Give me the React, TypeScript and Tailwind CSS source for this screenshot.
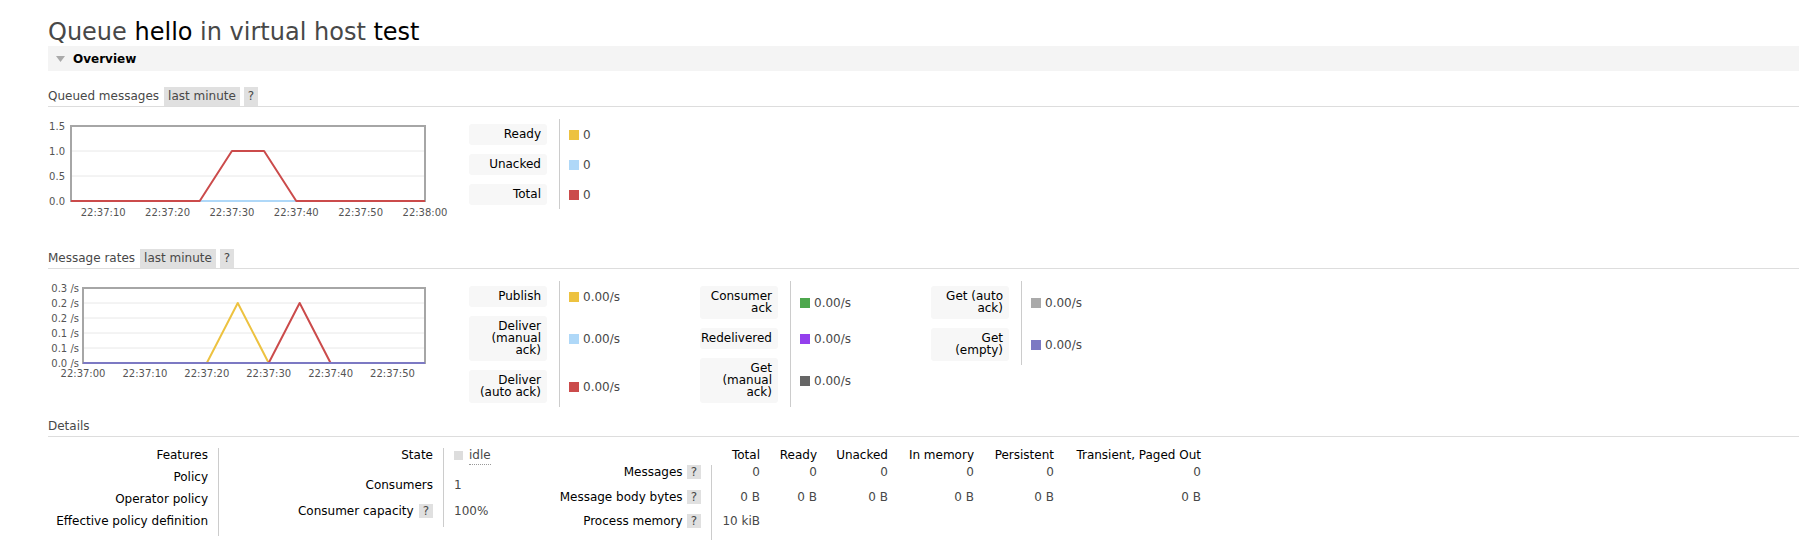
import React from "react";

type LegendItem = { label: React.ReactNode; color: string; value: string; h: string };

function SectionHeader({ title, className = "" }: { title: string; className?: string }) {
  return (
    <div className={"flex items-end border-b border-[#dddddd] h-[20px] text-[#484848] " + className}>
      <span className="leading-[19px]">{title}</span>
      <span className="ml-[5px] bg-[#e0e0e0] px-[4px] leading-[19px]">last minute</span>
      <span className="ml-[4px] bg-[#e0e0e0] px-[4px] leading-[19px]">?</span>
    </div>
  );
}

function Legend({ items }: { items: LegendItem[] }) {
  return (
    <div className="flex flex-col w-[231px] shrink-0">
      {items.map((it, i) => (
        <div key={i} className="flex">
          <div className="w-[90px] pr-[12px] py-[4.5px] shrink-0">
            <div className="w-[78px] bg-[#f7f7f7] rounded-[3px] text-right pr-[6px] py-[4.5px] leading-[12px] text-black whitespace-nowrap">
              {it.label}
            </div>
          </div>
          <div className="flex-1 border-l border-[#cccccc] pl-[9px] pt-[2px] flex items-center text-[#484848]">
            <span className={"w-[10px] h-[10px] mr-[4px] shrink-0 " + it.color} />
            <span>{it.value}</span>
          </div>
        </div>
      ))}
    </div>
  );
}

function Help({ className = "" }: { className?: string }) {
  return <span className={"inline-block bg-[#e0e0e0] px-[4px] leading-[14px] text-[#484848] " + className}>?</span>;
}

function Chart1() {
  const x = (t: number) => 23 + t * 6.436;
  const ticks = [5, 15, 25, 35, 45, 55];
  const labels = ["22:37:10", "22:37:20", "22:37:30", "22:37:40", "22:37:50", "22:38:00"];
  return (
    <svg width="421" height="100" className="shrink-0 block">
      <line x1="23" x2="377" y1="32" y2="32" stroke="#e8e8e8" strokeWidth="1" />
      <line x1="23" x2="377" y1="57" y2="57" stroke="#e8e8e8" strokeWidth="1" />
      <rect x="23" y="7" width="354" height="75" fill="none" stroke="#a6a6a6" strokeWidth="2" />
      {[["1.5", 7], ["1.0", 32], ["0.5", 57], ["0.0", 82]].map(([l, y]) => (
        <text key={l as string} x="17" y={(y as number) + 3.6} textAnchor="end" fontSize="10" fill="#545454">
          {l}
        </text>
      ))}
      {ticks.map((t, i) => (
        <text key={i} x={x(t)} y={96.6} textAnchor="middle" fontSize="10" fill="#545454">
          {labels[i]}
        </text>
      ))}
      <polyline points={`23,82 377,82`} fill="none" stroke="#edc240" strokeWidth="2" />
      <polyline points={`23,82 377,82`} fill="none" stroke="#afd8f8" strokeWidth="2" />
      <polyline
        points={`23,82 ${x(20)},82 ${x(25)},32 ${x(30)},32 ${x(35)},82 377,82`}
        fill="none"
        stroke="#cb4b4b"
        strokeWidth="2"
        strokeLinejoin="round"
      />
    </svg>
  );
}

function Chart2() {
  const x = (t: number) => 35 + t * 6.19;
  const labels = ["22:37:00", "22:37:10", "22:37:20", "22:37:30", "22:37:40", "22:37:50"];
  const ylab: [string, number][] = [
    ["0.3 /s", 7],
    ["0.2 /s", 22],
    ["0.2 /s", 37],
    ["0.1 /s", 52],
    ["0.1 /s", 67],
    ["0.0 /s", 82],
  ];
  return (
    <svg width="421" height="100" className="shrink-0 block">
      {[22, 37, 52, 67].map((y) => (
        <line key={y} x1="35" x2="377" y1={y} y2={y} stroke="#e8e8e8" strokeWidth="1" />
      ))}
      <rect x="35" y="7" width="342" height="75" fill="none" stroke="#a6a6a6" strokeWidth="2" />
      {ylab.map(([l, y], i) => (
        <text key={i} x="31" y={y + 3.6} textAnchor="end" fontSize="10" fill="#545454">
          {l}
        </text>
      ))}
      {labels.map((l, i) => (
        <text key={i} x={x(i * 10)} y={95.6} textAnchor="middle" fontSize="10" fill="#545454">
          {l}
        </text>
      ))}
      <polyline
        points={`35,82 ${x(20)},82 ${x(25)},22 ${x(30)},82 377,82`}
        fill="none"
        stroke="#edc240"
        strokeWidth="2"
        strokeLinejoin="round"
      />
      <polyline
        points={`35,82 ${x(30)},82 ${x(35)},22 ${x(40)},82 377,82`}
        fill="none"
        stroke="#cb4b4b"
        strokeWidth="2"
        strokeLinejoin="round"
      />
      <polyline points={`35,82 377,82`} fill="none" stroke="#7c79c3" strokeWidth="2" />
    </svg>
  );
}

export default function App() {
  const queued: LegendItem[] = [
    { label: "Ready", color: "bg-[#edc240]", value: "0", h: "" },
    { label: "Unacked", color: "bg-[#afd8f8]", value: "0", h: "" },
    { label: "Total", color: "bg-[#cb4b4b]", value: "0", h: "" },
  ];
  const rates1: LegendItem[] = [
    { label: "Publish", color: "bg-[#edc240]", value: "0.00/s", h: "" },
    { label: <>Deliver<br />(manual<br />ack)</>, color: "bg-[#afd8f8]", value: "0.00/s", h: "" },
    { label: <>Deliver<br />(auto ack)</>, color: "bg-[#cb4b4b]", value: "0.00/s", h: "" },
  ];
  const rates2: LegendItem[] = [
    { label: <>Consumer<br />ack</>, color: "bg-[#4da74d]", value: "0.00/s", h: "" },
    { label: "Redelivered", color: "bg-[#9440ed]", value: "0.00/s", h: "" },
    { label: <>Get<br />(manual<br />ack)</>, color: "bg-[#666666]", value: "0.00/s", h: "" },
  ];
  const rates3: LegendItem[] = [
    { label: <>Get (auto<br />ack)</>, color: "bg-[#aaaaaa]", value: "0.00/s", h: "" },
    { label: <>Get<br />(empty)</>, color: "bg-[#7c79c3]", value: "0.00/s", h: "" },
  ];

  const cols = [
    { name: "Total", w: "w-[48px]", m: "0", b: "0 B", p: "10 kiB" },
    { name: "Ready", w: "w-[57px]", m: "0", b: "0 B", p: "" },
    { name: "Unacked", w: "w-[71px]", m: "0", b: "0 B", p: "" },
    { name: "In memory", w: "w-[86px]", m: "0", b: "0 B", p: "" },
    { name: "Persistent", w: "w-[80px]", m: "0", b: "0 B", p: "" },
    { name: "Transient, Paged Out", w: "w-[147px]", m: "0", b: "0 B", p: "" },
  ];

  return (
    <div className="font-['DejaVu_Sans',Verdana,sans-serif] text-[12px] text-[#484848] pl-[48px] w-[1799px] h-[540px] overflow-hidden bg-white">
      <h1 className="pt-[20px] text-[24px] leading-[24px] font-normal mb-[2px] text-[#484848] whitespace-nowrap">
        Queue <span className="text-black">hello</span> in virtual host <span className="text-black">test</span>
      </h1>
      <div className="h-[25px] bg-[#f4f4f4] flex items-center">
        <svg width="9" height="6" className="ml-[8px] block">
          <polygon points="0,0 9,0 4.5,6" fill="#aaaaaa" />
        </svg>
        <span className="ml-[8px] font-bold text-black">Overview</span>
      </div>

      <SectionHeader title="Queued messages" className="mt-[16px]" />
      <div className="flex mt-[12px]">
        <Chart1 />
        <Legend items={queued} />
      </div>

      <SectionHeader title="Message rates" className="mt-[30px]" />
      <div className="flex mt-[12px] items-start">
        <Chart2 />
        <Legend items={rates1} />
        <Legend items={rates2} />
        <Legend items={rates3} />
      </div>

      <div className="mt-[10px] border-b border-[#dddddd] leading-[19px] h-[20px] text-[#484848]">Details</div>

      <div className="flex mt-[11px] items-start">
        {/* table 1 */}
        <div className="flex flex-col w-[210px] shrink-0">
          {["Features", "Policy", "Operator policy", "Effective policy definition"].map((l) => (
            <div key={l} className="flex">
              <div className="w-[170px] pr-[10px] text-right leading-[14px] pb-[8px] text-black whitespace-nowrap">{l}</div>
              <div className="flex-1 border-l border-[#cccccc]" />
            </div>
          ))}
        </div>
        {/* table 2 */}
        <div className="flex flex-col w-[282px] shrink-0">
          <div className="flex h-[29px]">
            <div className="w-[185px] pr-[10px] text-right leading-[14px] text-black">State</div>
            <div className="flex-1 border-l border-[#cccccc] pl-[10px] leading-[14px] flex items-start">
              <span className="w-[9px] h-[9px] bg-[#dddddd] mt-[3px] mr-[6px]" />
              <span className="border-b border-dotted border-[#999999] leading-[17px] -mt-[1px]">idle</span>
            </div>
          </div>
          <div className="flex h-[26px]">
            <div className="w-[185px] pr-[10px] text-right leading-[14px] pt-[1px] text-black">Consumers</div>
            <div className="flex-1 border-l border-[#cccccc] pl-[10px] leading-[14px] pt-[1px]">1</div>
          </div>
          <div className="flex h-[24px]">
            <div className="w-[185px] pr-[10px] text-right leading-[14px] pt-[1px] text-black whitespace-nowrap">
              Consumer capacity<Help className="ml-[5px]" />
            </div>
            <div className="flex-1 border-l border-[#cccccc] pl-[10px] leading-[14px] pt-[1px]">100%</div>
          </div>
        </div>
        {/* table 3 */}
        <div className="flex flex-col shrink-0">
          <div className="flex h-[17px] leading-[14px] text-black">
            <div className="w-[172px]" />
            {cols.map((c) => (
              <div key={c.name} className={c.w + " text-right whitespace-nowrap"}>{c.name}</div>
            ))}
          </div>
          <div className="flex h-[25px] leading-[14px]">
            <div className="w-[172px] pr-[11px] text-right text-black whitespace-nowrap">
              Messages<Help className="ml-[4px]" />
            </div>
            <div className="flex border-l border-[#cccccc] -ml-[1px]">
              {cols.map((c) => (
                <div key={c.name} className={c.w + " text-right"}>{c.m}</div>
              ))}
            </div>
          </div>
          <div className="flex h-[24px] leading-[14px]">
            <div className="w-[172px] pr-[11px] text-right text-black whitespace-nowrap">
              Message body bytes<Help className="ml-[4px]" />
            </div>
            <div className="flex border-l border-[#cccccc] -ml-[1px]">
              {cols.map((c) => (
                <div key={c.name} className={c.w + " text-right"}>{c.b}</div>
              ))}
            </div>
          </div>
          <div className="flex h-[26px] leading-[14px]">
            <div className="w-[172px] pr-[11px] text-right text-black whitespace-nowrap">
              Process memory<Help className="ml-[4px]" />
            </div>
            <div className="flex border-l border-[#cccccc] -ml-[1px]">
              {cols.map((c) => (
                <div key={c.name} className={c.w + " text-right whitespace-nowrap"}>{c.p}</div>
              ))}
            </div>
          </div>
        </div>
      </div>
    </div>
  );
}
